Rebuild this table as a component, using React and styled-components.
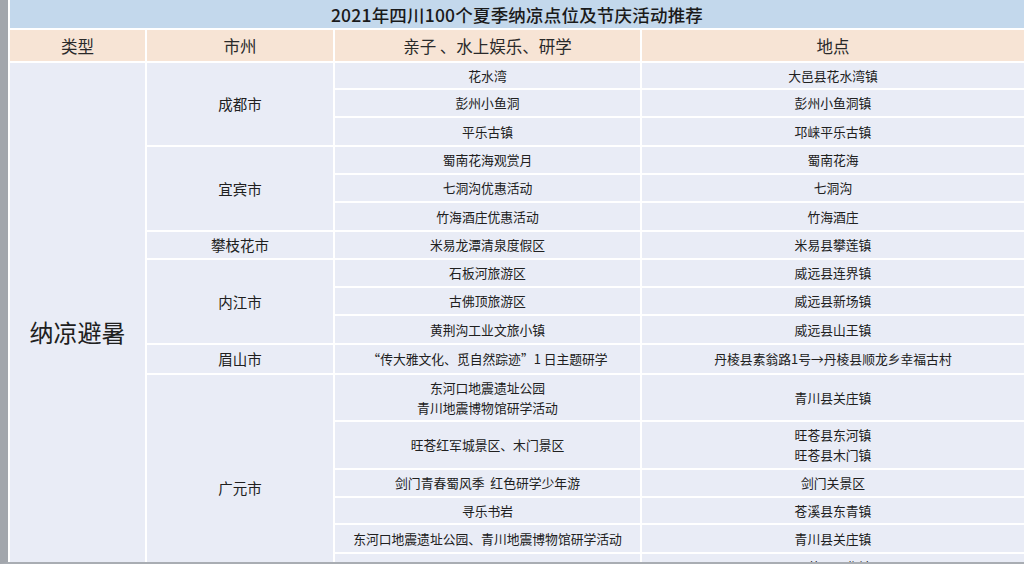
import React from 'react';
import styled, { createGlobalStyle } from 'styled-components';

const GlobalStyle = createGlobalStyle`
  * { box-sizing: border-box; }
  html, body { margin: 0; padding: 0; background: #ffffff; }
  body {
    font-family: "Noto Sans CJK SC", "Noto Sans", "Liberation Sans", sans-serif;
    color: #222;
  }
`;

const Frame = styled.div`
  width: 1024px;
  height: 564px;
  overflow: hidden;
  background: #ffffff;
  border-left: 8px solid #a2a6ac;
  border-bottom: 2px solid #a9adb3;
`;

const Sheet = styled.div`
  display: grid;
  grid-template-columns: 135px 186px 305px 1fr;
  grid-template-rows: ${(p) => p.$rows};
  gap: 2px;
  padding-left: 2px;
`;

const Title = styled.div`
  grid-column: 1 / -1;
  background: #c3d8ec;
  display: flex;
  align-items: center;
  justify-content: center;
  font-size: 17.5px;
  font-weight: 500;
  color: #1a1a1a;
  letter-spacing: 0.2px;
`;

const HeadCell = styled.div`
  background: #f7e4d5;
  display: flex;
  align-items: center;
  justify-content: center;
  font-size: 16.5px;
  color: #2a2a2a;
  white-space: pre;
`;

const Cell = styled.div`
  grid-row: span ${(p) => p.$span || 1};
  background: #e9ecf6;
  display: flex;
  flex-direction: column;
  align-items: center;
  justify-content: ${(p) => (p.$last ? 'flex-end' : 'center')};
  font-size: ${(p) => (p.$size === 'big' ? '24px' : p.$size === 'city' ? '14.5px' : '12.8px')};
  line-height: ${(p) => (p.$size === 'big' ? '30px' : '20px')};
  padding-bottom: ${(p) => (p.$last ? '4px' : '0')};
  color: #202020;
  white-space: pre;
`;

const groups = [
  {
    city: '成都市',
    rows: [
      { h: 25, a: '花水湾', b: '大邑县花水湾镇' },
      { h: 26, a: '彭州小鱼洞', b: '彭州小鱼洞镇' },
      { h: 27, a: '平乐古镇', b: '邛崃平乐古镇' },
    ],
  },
  {
    city: '宜宾市',
    rows: [
      { h: 26, a: '蜀南花海观赏月', b: '蜀南花海' },
      { h: 26, a: '七洞沟优惠活动', b: '七洞沟' },
      { h: 27, a: '竹海酒庄优惠活动', b: '竹海酒庄' },
    ],
  },
  {
    city: '攀枝花市',
    rows: [{ h: 26, a: '米易龙潭清泉度假区', b: '米易县攀莲镇' }],
  },
  {
    city: '内江市',
    rows: [
      { h: 26, a: '石板河旅游区', b: '威远县连界镇' },
      { h: 26, a: '古佛顶旅游区', b: '威远县新场镇' },
      { h: 27, a: '黄荆沟工业文旅小镇', b: '威远县山王镇' },
    ],
  },
  {
    city: '眉山市',
    rows: [{ h: 28, a: '“传大雅文化、觅自然踪迹”1 日主题研学', b: '丹棱县素翁路1号→丹棱县顺龙乡幸福古村' }],
  },
  {
    city: '广元市',
    rows: [
      { h: 45, a: ['东河口地震遗址公园', '青川地震博物馆研学活动'], b: '青川县关庄镇' },
      { h: 46, a: '旺苍红军城景区、木门景区', b: ['旺苍县东河镇', '旺苍县木门镇'] },
      { h: 26, a: '剑门青春蜀风季  红色研学少年游', b: '剑门关景区' },
      { h: 25, a: '寻乐书岩', b: '苍溪县东青镇' },
      { h: 27, a: '东河口地震遗址公园、青川地震博物馆研学活动', b: '青川县关庄镇' },
      { h: 46, a: '米仓山国家森林公园', b: ['旺苍县国华镇', '旺苍县檬子乡'], last: true },
    ],
  },
];

const lines = (v) =>
  Array.isArray(v) ? v.map((t) => <span key={t}>{t}</span>) : v;

export default function App() {
  const allRows = groups.flatMap((g) => g.rows);
  const template = ['28px', '31px', ...allRows.map((r) => `${r.h}px`)].join(' ');

  return (
    <Frame>
      <GlobalStyle />
      <Sheet $rows={template}>
        <Title>2021年四川100个夏季纳凉点位及节庆活动推荐</Title>
        <HeadCell>类型</HeadCell>
        <HeadCell>市州</HeadCell>
        <HeadCell>亲子 、水上娱乐、研学</HeadCell>
        <HeadCell>地点</HeadCell>

        <Cell $span={allRows.length} $size="big">纳凉避暑</Cell>
        {groups.map((g) => (
          <React.Fragment key={g.city}>
            <Cell $span={g.rows.length} $size="city">{g.city}</Cell>
            {g.rows.map((r, i) => (
              <React.Fragment key={i}>
                <Cell $last={r.last}>{lines(r.a)}</Cell>
                <Cell>{lines(r.b)}</Cell>
              </React.Fragment>
            ))}
          </React.Fragment>
        ))}
      </Sheet>
    </Frame>
  );
}
